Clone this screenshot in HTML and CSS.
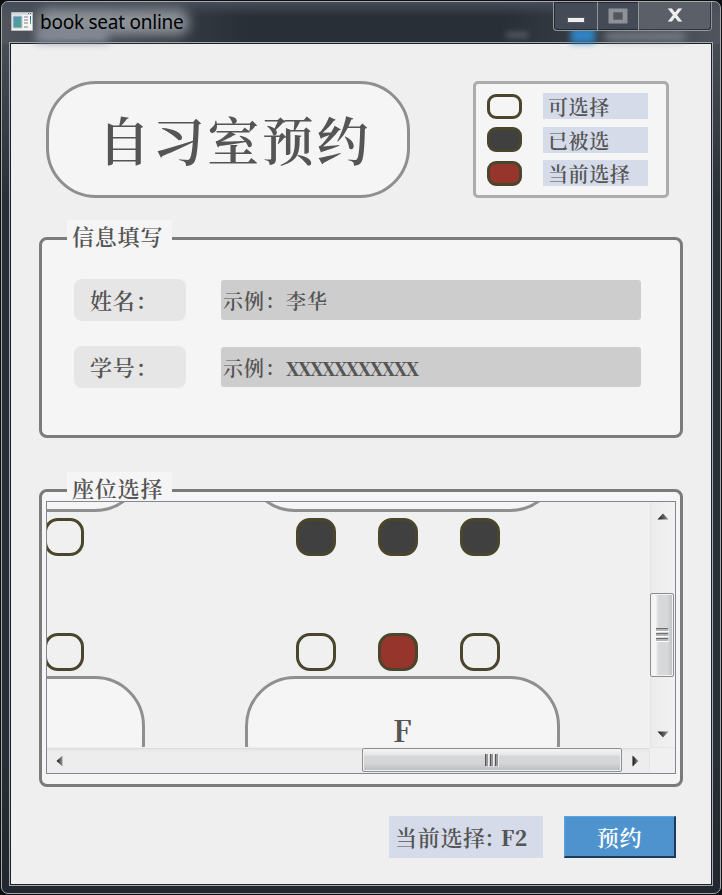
FILE: index.html
```
<!DOCTYPE html>
<html lang="zh-CN">
<head>
<meta charset="utf-8">
<title>book seat online</title>
<link rel="stylesheet" href="styles.css">
</head>
<body>
<div class="window">
  <header class="titlebar">
    <span class="blur blur-a"></span><span class="blur blur-b"></span><span class="blur blur-c"></span><span class="blur blur-d"></span><span class="blur blur-e"></span>
    <svg class="app-icon" width="22" height="19" viewBox="0 0 22 19">
      <defs><linearGradient id="pic" x2="1" y2="1"><stop stop-color="#588fb5"/><stop offset="1" stop-color="#4da58a"/></linearGradient></defs>
      <path d="M.5.5h21v18H.5z" fill="#f5f5f5" stroke="#b9bcbf"/>
      <path d="M1 1h20v2H1z" fill="#d5dce3"/><path d="M17 1h1v1h-1zM19 1h1v1h-1z" fill="#44617e"/>
      <path d="M2 4h9v12H2z" fill="url(#pic)" stroke="#c0ccd3"/>
      <path d="M13 5h4M13 8h4M13 11h4M13 15h4" stroke="#bbb" stroke-width="2"/>
      <path d="M19.500 4v4" stroke="#2563a5"/><path d="M19.500 8v4" stroke="#46a36b"/>
    </svg>
    <span class="caption">book seat online</span>
    <div class="controls">
      <span class="ctl ctl-min"><svg width="18" height="6"><path d="M.5.5h17v5H.5z" fill="#eee" stroke="#555b64"/></svg></span>
      <span class="ctl ctl-max"><svg width="20" height="16"><path d="M3 3h14v10H3z" fill="none" stroke="#8e9197" stroke-width="5"/><path d="M5.500 4.500h9v7h-9z" fill="#50555e" stroke="#656a72"/></svg></span>
      <span class="ctl ctl-close"><svg width="18" height="16" viewBox="0 0 18 16"><path d="M1 1h5l3 4 3-4h5l-5.500 7 5.500 7h-5l-3-4-3 4H1l5.500-7z" fill="#eee" stroke="#555b64" stroke-width=".8"/></svg></span>
    </div>
  </header>
  <main class="client">
    <section class="top">
      <h1 class="title">自习室预约</h1>
      <ul class="legend">
        <li><i class="swatch"></i><span>可选择</span></li>
        <li><i class="swatch taken"></i><span>已被选</span></li>
        <li><i class="swatch current"></i><span>当前选择</span></li>
      </ul>
    </section>
    <section class="group info">
      <h2 class="group-title">信息填写</h2>
      <div class="field"><span class="label">姓名：</span><div class="input">示例：李华</div></div>
      <div class="field"><span class="label">学号：</span><div class="input">示例：<b class="xs">XXXXXXXXXXX</b></div></div>
    </section>
    <section class="group seats">
      <h2 class="group-title">座位选择</h2>
      <div class="scroller">
        <div class="canvas">
          <div class="table t-d"></div><div class="table t-c"></div>
          <div class="table t-e"></div><div class="table t-f">F</div>
          <i class="seat c0 r0"></i><i class="seat c1 r0 taken"></i><i class="seat c2 r0 taken"></i><i class="seat c3 r0 taken"></i>
          <i class="seat c0 r1"></i><i class="seat c1 r1"></i><i class="seat c2 r1 current"></i><i class="seat c3 r1"></i>
        </div>
        <div class="vbar">
          <svg class="arrow-v" width="12" height="7"><defs><linearGradient id="dark"><stop stop-color="#111"/><stop offset="1" stop-color="#999"/></linearGradient></defs><path d="M.5 6.500L6 .5l5.500 6z" fill="url(#dark)"/></svg>
          <div class="vthumb"><svg width="13" height="16"><path d="M0 1.500h12M0 6.500h12M0 11.500h12" stroke="#6c6c6c"/><path d="M0 3h12M0 8h12M0 13h12" stroke="#b5b5b5" stroke-width="2"/><path d="M0 4.500h13M0 9.500h13M0 14.500h13" stroke="#fff"/></svg></div>
          <svg class="arrow-v low" width="12" height="7"><path d="M.5.5L6 6.500l5.500-6z" fill="url(#dark)"/></svg>
        </div>
        <div class="hbar">
          <svg class="arrow-l" width="7" height="12"><path d="M6.500.5L.5 6l6 5.500z" fill="url(#dark)"/></svg>
          <div class="hthumb"><svg width="16" height="13"><path d="M1.500 0v12M6.500 0v12M11.500 0v12" stroke="#555"/><path d="M3 0v12M8 0v12M13 0v12" stroke="#999" stroke-width="2"/><path d="M4.500 0v13M9.500 0v13M14.500 0v13" stroke="#eee"/></svg></div>
          <svg class="arrow-r" width="7" height="12"><path d="M.5.5L6.500 6l-6 5.500z" fill="url(#dark)"/></svg>
        </div>
      </div>
    </section>
    <footer class="actions">
      <div class="status">当前选择: <b>F2</b></div>
      <button class="submit" type="button">预约</button>
    </footer>
  </main>
</div>
</body>
</html>
```
FILE: styles.css
```
* { box-sizing: border-box; }
body {
  margin: 0; width: 722px; height: 895px; padding: 1px; overflow: hidden;
  background: #0d0f12; color: #555; font-weight: 600;
  font-family: "Noto Serif CJK SC", "Liberation Serif", "Noto Sans CJK SC", serif;
}
h1, h2, ul { margin: 0; padding: 0; font-weight: inherit; list-style: none; }
i { display: block; }
.window {
  width: 720px; height: 893px; padding: 0 7px;
  border: 1px solid #a5a8ad; border-radius: 7px; overflow: hidden;
  background: linear-gradient(90deg, #50555d 0, #292f36 250px, #292f36 500px, #50555d) 0 0 / 100% 42px no-repeat,
    linear-gradient(#50555d, #292f36 200px, #292f36 750px, #22262e);
}
.titlebar { position: relative; height: 40px; display: flex; align-items: flex-start; padding-left: 2px; }
.titlebar::before { content: ""; position: absolute; inset: 0 -7px auto; height: 14px; background: linear-gradient(#454d59, #454d5900); }
.app-icon { position: relative; margin-top: 10px; }
.caption { position: relative; margin: 8px 0 0 7px; font: 19px/24px "Noto Sans", sans-serif; letter-spacing: -.25px; color: #000; white-space: nowrap; }
.blur { position: absolute; filter: blur(6px); }
.blur-a { left: 28px; top: 7px; width: 152px; height: 26px; background: #8d9299; border-radius: 12px; }
.blur-b { left: 27px; top: 28px; width: 72px; height: 12px; background: #858c98; filter: blur(4px); }
.blur-c { left: 562px; top: 25px; width: 24px; height: 16px; background: #2f83c4; filter: blur(3px); }
.blur-d { left: 596px; top: 31px; width: 80px; height: 7px; background: #858b93; filter: blur(4px); }
.blur-e { left: 497px; top: 31px; width: 22px; height: 4px; background: #666d76; filter: blur(3px); }
.controls {
  position: relative; display: flex; margin-left: auto; margin-right: 1px; width: 159px; height: 29px;
  border: 1px solid #92959a; border-top: 0; border-radius: 0 0 4px 4px; background: #444b56;
  box-shadow: inset 0 0 0 1px #242a33;
}
.ctl { display: flex; align-items: center; justify-content: center; }
.ctl + .ctl { border-left: 1px solid #92959a; }
.ctl-min { width: 43px; padding-top: 7px; }
.ctl-max { width: 41px; }
.ctl-close { flex: 1; padding-bottom: 2px; background: #5a5f68; border-radius: 0 0 3px 0; box-shadow: inset -1px -1px #30353e; }
.client {
  width: 704px; height: 844px; padding: 37px 28px 0 29px;
  border: 1px solid #a6a9ae; background: #efefef; box-shadow: inset 0 0 0 1px #1c2127;
}
.top { display: flex; justify-content: space-between; height: 117px; margin: 1px 15px 0 7px; }
.title {
  width: 364px; height: 117px; padding-left: 49px;
  border: 3px solid #8f8f8f; border-radius: 50px; background: #f5f5f5;
  font-size: 52px; line-height: 109px; letter-spacing: 2.600px; white-space: nowrap;
}
.legend {
  display: grid; grid-template-rows: 26px 26px 26px; row-gap: 7.500px; width: 196px;
  padding: 9px 11px; border: 3px solid #acacac; border-radius: 5px; background: #f5f5f5;
}
.legend li { display: flex; align-items: center; justify-content: space-between; padding-right: 7px; }
.legend span { width: 105px; height: 26px; padding-left: 5px; background: #d5dbe9; font-size: 20px; line-height: 27px; letter-spacing: .6px; }
.swatch { width: 35px; height: 25px; border: 3px solid #4a452b; border-radius: 9px; }
.taken { background: #404040; }
.current { background: #96352c; }
.group { width: 644px; border: 3px solid #7b7b7b; border-radius: 8px; background: #f5f5f5; }
.group-title {
  width: 105px; height: 33px; margin: -20px 0 0 25px; padding-left: 5px; background: #f5f5f5;
  font-size: 22px; line-height: 32px; letter-spacing: .8px; white-space: nowrap;
}
.info { height: 201px; margin-top: 39px; }
.field { display: flex; align-items: center; gap: 35px; height: 42px; margin: 0 0 25px 32px; }
.group-title + .field { margin-top: 26px; }
.label { width: 112px; height: 42px; padding-left: 16px; border-radius: 8px; background: #e6e6e6; font-size: 22px; line-height: 41px; letter-spacing: .8px; }
.input { width: 420px; height: 40px; padding-left: 2px; border-radius: 3px; background: #cdcdcd; font-size: 20px; line-height: 42px; letter-spacing: 1px; white-space: nowrap; }
.xs { font-size: 18.500px; letter-spacing: -1.700px; }
.seats { height: 298px; margin-top: 51px; }
.seats .group-title { height: 29px; }
.scroller {
  display: grid; grid-template: 246px 25px / 603px 25px;
  width: 630px; height: 273px; margin: 0 0 0 4px;
  border: 1px solid #828790; background: #f0f0f0;
}
.canvas { position: relative; height: 245px; overflow: hidden; }
.table { position: absolute; width: 315px; height: 117px; border: 3px solid #8f8f8f; border-radius: 50px; background: #f5f5f5; text-align: center; padding-top: 37px; font-size: 29px; font-weight: bold; line-height: 28px; }
.t-d { left: -217px; top: -107px; }
.t-c { left: 198px; top: -107px; }
.t-e { left: -217px; top: 174px; }
.t-f { left: 198px; top: 174px; }
.seat { position: absolute; width: 40px; height: 38px; border: 3px solid #4a452b; border-radius: 14px; }
.c0 { left: -3px; } .c1 { left: 249px; } .c2 { left: 331px; } .c3 { left: 413px; }
.r0 { top: 16px; } .r1 { top: 131px; }
.vbar { display: flex; flex-direction: column; align-items: center; width: 25px; padding: 11px 0 0; border-left: 1px solid #e5e5e5; border-bottom: 1px solid #e5e5e5; background: linear-gradient(90deg, #ebebeb, #f2f2f2); }
.vthumb { display: flex; align-items: center; justify-content: center; width: 24px; height: 84px; margin: 73px 0 54px -2px; border: 1px solid #8f8f8f; border-radius: 2px; background: linear-gradient(90deg, #f5f5f5 0 5px, #e5e5e6 6px, #d7d8da 8px 16px, #bfc0c3 22px); box-shadow: inset 0 0 0 1px #f2f2f2; }
.hbar { display: flex; align-items: center; width: 603px; border-right: 1px solid #e5e5e5; border-top: 1px solid #ddd; background: linear-gradient(#e6e6e6, #ededed 4px); padding-left: 9px; }
.hthumb { display: flex; align-items: center; justify-content: center; width: 260px; height: 24px; margin: -2px 10px 0 299px; border: 1px solid #8f8f8f; border-radius: 2px; background: linear-gradient(#f5f5f5, #e6e6e7 6px, #d5d6d8 7px 14px, #bcbdc0 22px); box-shadow: inset 0 0 0 1px #f2f2f2; }
.actions { display: flex; justify-content: flex-end; gap: 21px; margin: 29px 8px 0 0; }
.status { width: 154px; height: 42px; padding-left: 6px; background: #d5dbe9; font-size: 22px; line-height: 42px; letter-spacing: .7px; white-space: nowrap; }
.status b { font-size: 20.500px; margin-left: 1px; letter-spacing: .3px; }
.submit {
  width: 112px; height: 42px; padding: 0; border: 1px solid #1c3c5a; border-top-color: #55a7e8; border-left-color: #55a7e8; border-right-width: 2px; border-bottom-width: 2px;
  background: #4f93ce; color: #fff; font-family: inherit; font-weight: 600; font-size: 22px; line-height: 38px; letter-spacing: .7px;
}
```
